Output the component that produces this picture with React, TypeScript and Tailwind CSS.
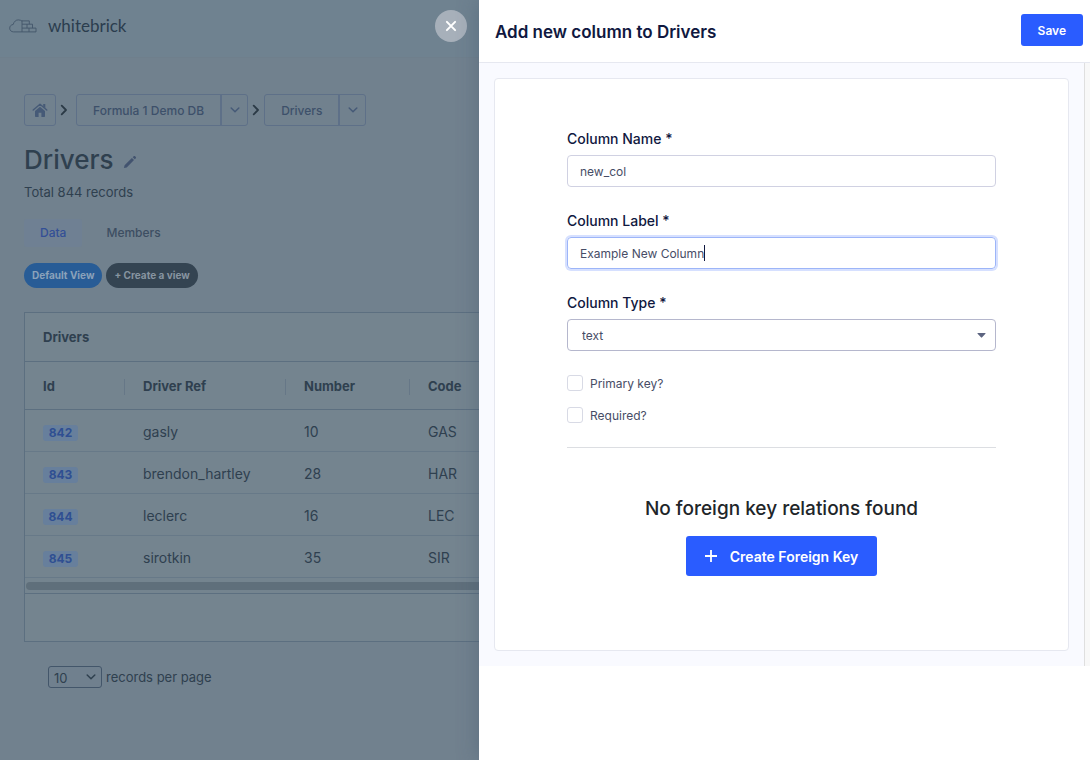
import React from "react";

type Driver = { id: number; ref: string; number: number; code: string };

const drivers: Driver[] = [
  { id: 842, ref: "gasly", number: 10, code: "GAS" },
  { id: 843, ref: "brendon_hartley", number: 28, code: "HAR" },
  { id: 844, ref: "leclerc", number: 16, code: "LEC" },
  { id: 845, ref: "sirotkin", number: 35, code: "SIR" },
];

function CloudBricks() {
  return (
    <svg width="28" height="14" viewBox="0 0 28 14" fill="none" stroke="#43566a" strokeWidth="0.9" strokeLinejoin="round" aria-hidden="true">
      <path d="M13 12.9H4.500C2.200 12.9.7 11.200.7 9.200c0-2 1.500-3.600 3.500-3.700C4.900 2.500 7 .9 9.300.9c1.500 0 2.800.5 3.700 1.200" />
      <path d="M13 1.500V12.900h14V9.100H13M13 5.200h10.500v3.900M13 1.900h7.300v3.300M18 5.200v3.900M20 9.100v3.800" />
    </svg>
  );
}

function HomeIcon() {
  return (
    <svg width="16" height="16" viewBox="0 0 16 16" aria-hidden="true">
      <path d="M8 4.800 3 9v5.200c0 .4.300.7.700.7h2.900v-4.200h2.800v4.200h2.900c.4 0 .7-.3.700-.7V9z" fill="#465a77" />
      <path d="M1.200 8 8 2.200 14.800 8" fill="none" stroke="#465a77" strokeWidth="1.400" strokeLinecap="round" strokeLinejoin="round" />
      <path d="M11.200 1.900h2.100v4.300l-2.100-1.800z" fill="#465a77" />
    </svg>
  );
}

function CrumbArrow() {
  return (
    <svg width="8" height="12" viewBox="0 0 8 12" fill="none" stroke="#2b3a46" strokeWidth="1.800" strokeLinecap="round" strokeLinejoin="round" aria-hidden="true">
      <path d="M1.700 1.700 6 6l-4.300 4.300" />
    </svg>
  );
}

function ChevronDown({ color }: { color: string }) {
  return (
    <svg width="10" height="6" viewBox="0 0 10 6" fill="none" stroke={color} strokeWidth="1.500" strokeLinecap="round" strokeLinejoin="round" aria-hidden="true">
      <path d="M1.200 1 5 4.800 8.800 1" />
    </svg>
  );
}

function SplitButton({ label }: { label: string }) {
  return (
    <div className="flex h-8 rounded-[3px] border border-[#5e7088] text-[12px] font-medium text-[#3d506a]">
      <button type="button" className="whitespace-nowrap px-4 pt-0.5">{label}</button>
      <button type="button" aria-label={label + " menu"} className="flex w-[27px] items-center justify-center border-l-2 border-[#5e7088]">
        <ChevronDown color="#465a77" />
      </button>
    </div>
  );
}

function DriversPage() {
  return (
    <div className="min-w-0 flex-1 overflow-hidden bg-[#71818e] text-[#2f404f]">
      <header className="flex h-[58px] items-start justify-between border-b border-[#6f7f8c] bg-[#6f8290] pl-[9px] pr-3 pt-2.5">
        <a href="#" className="flex h-8 items-center gap-[11px]">
          <CloudBricks />
          <span className="font-['Lato',sans-serif] text-[17px] font-normal leading-8 text-[#2b3d4e]">whitebrick</span>
        </a>
        <button type="button" aria-label="Close" className="flex size-8 items-center justify-center rounded-full bg-[#a7b0ba]">
          <svg width="12" height="12" viewBox="0 0 12 12" stroke="#fff" strokeWidth="2" strokeLinecap="round" aria-hidden="true">
            <path d="M1.900 1.900l8.200 8.200M10.100 1.900 1.900 10.100" />
          </svg>
        </button>
      </header>

      <main className="pl-6 pt-9">
        <nav aria-label="Breadcrumb" className="flex items-center">
          <button type="button" aria-label="Home" className="flex size-8 items-center justify-center rounded-[3px] border border-[#5e7088]">
            <HomeIcon />
          </button>
          <span className="flex w-5 justify-center pr-1"><CrumbArrow /></span>
          <SplitButton label="Formula 1 Demo DB" />
          <span className="flex w-4 justify-center"><CrumbArrow /></span>
          <SplitButton label="Drivers" />
        </nav>

        <div className="mt-4 flex h-9 items-center gap-2.5">
          <h1 className="text-[26px] font-medium leading-9">Drivers</h1>
          <button type="button" aria-label="Rename table" className="pt-1">
            <svg width="14" height="14" viewBox="0 0 14 14" fill="#42536f" aria-hidden="true">
              <path d="M.9 13.100 1.600 10.300 8.900 3l2.100 2.100-7.300 7.300zM9.700 2.200l1-1c.4-.4 1-.4 1.400 0l.7.700c.4.4.4 1 0 1.400l-1 1z" />
            </svg>
          </button>
        </div>
        <p className="mt-1 text-[13px] leading-5">Total 844 records</p>

        <div role="tablist" className="mt-[17px] flex gap-2 text-[12px] font-medium">
          <button role="tab" aria-selected="true" type="button" className="h-7 rounded-[3px] bg-[#6f8093] px-4 text-[#334f96]">Data</button>
          <button role="tab" aria-selected="false" type="button" className="h-7 px-4 text-[#3d4e62]">Members</button>
        </div>

        <div className="mt-4 flex gap-1 text-[10px] font-bold">
          <button type="button" className="h-[25px] rounded-full bg-[#285c96] px-2 text-[#8ba2ba]">Default View</button>
          <button type="button" className="h-[25px] rounded-full bg-[#344452] px-2 text-[#8794a0]">+ Create a view</button>
        </div>

        <section className="mt-6 border-y border-l border-[#5c6f80] bg-[#74848f]">
          <h2 className="flex h-[49px] items-center border-b border-[#5c6f80] pl-[18px] pt-0.5 text-[13px] font-bold">Drivers</h2>
          <table className="w-full table-fixed border-separate border-spacing-0 text-left">
            <colgroup>
              <col className="w-[100px]" />
              <col className="w-[161px]" />
              <col className="w-[124px]" />
              <col />
            </colgroup>
            <thead>
              <tr className="text-[13px]">
                {["Id", "Driver Ref", "Number", "Code"].map((name, i) => (
                  <th key={name} className="h-12 border-b border-[#5c6f80] px-0 pb-0 pt-0.5 font-bold">
                    <div className={i < 3 ? "flex h-4 items-center border-r border-[#667787] pl-[18px]" : "flex h-4 items-center pl-[18px]"}>{name}</div>
                  </th>
                ))}
              </tr>
            </thead>
            <tbody>
              {drivers.map((d) => (
                <tr key={d.id} className="text-[14px]">
                  <td className="h-[42px] border-b border-[#677988] pb-0 pl-[18px] pt-1">
                    <a href="#" className="flex h-4 w-[35px] items-center justify-center rounded-[3px] bg-[#677f9c] text-[12px] font-bold text-[#2f4f92]">{d.id}</a>
                  </td>
                  <td className="h-[42px] border-b border-[#677988] pb-0 pl-[18px] pt-0.5">{d.ref}</td>
                  <td className="h-[42px] border-b border-[#677988] pb-0 pl-[18px] pt-0.5">{d.number}</td>
                  <td className="h-[42px] border-b border-[#677988] pb-0 pl-[18px] pt-0.5">{d.code}</td>
                </tr>
              ))}
            </tbody>
          </table>
          <div className="flex h-4 items-center border-b border-[#5c6f80] pl-px">
            <div className="h-2 flex-1 rounded-l-full bg-[#5f6f7b]" />
          </div>
          <div className="h-[47px]" />
        </section>

        <div className="mt-6 flex h-[22px] items-center gap-1 pl-6 text-[13px]">
          <div className="relative">
            <select id="page-size" defaultValue="10" className="block h-[22px] w-[54px] appearance-none rounded-[3px] border border-[#43566a] bg-[#70808e] pl-[5px] pt-0.5 text-[13px]">
              <option>10</option>
              <option>25</option>
              <option>50</option>
            </select>
            <span className="pointer-events-none absolute inset-y-0 right-1.5 flex items-center">
              <ChevronDown color="#2f404f" />
            </span>
          </div>
          <label htmlFor="page-size" className="pt-0.5">records per page</label>
        </div>
      </main>
    </div>
  );
}

function CheckRow({ id, label }: { id: string; label: string }) {
  return (
    <div className="flex h-4 items-center gap-[7px]">
      <input id={id} type="checkbox" className="size-4 appearance-none rounded-[3px] border border-[#d8dae5] bg-white checked:bg-[#2a5cff]" />
      <label htmlFor={id} className="pt-0.5 text-[12px] text-[#474d66]">{label}</label>
    </div>
  );
}

function ColumnPanel() {
  return (
    <form className="z-10 w-[611px] shrink-0 bg-white shadow-[0_0_20px_rgba(67,90,111,0.47)]" onSubmit={(e) => e.preventDefault()}>
      <header className="flex items-center justify-between border-b border-[#e6e8f0] pb-4 pl-4 pr-[7px] pt-3.5">
        <h2 className="pt-1 text-[17px] font-semibold leading-6 text-[#101840]">Add new column to Drivers</h2>
        <button type="submit" className="h-8 rounded-[3px] bg-[#2a5cff] px-[17px] pt-0.5 text-[12px] font-semibold text-white">Save</button>
      </header>

      <div className="flex">
        <div className="flex-1 border-r border-[#dfdfdf] bg-[#f9faff] p-[15px]">
          <div className="rounded-[4px] border border-[#e6e8f0] bg-white px-[72px] pb-[74px] pt-[50px] text-[12px] text-[#474d66]">
            <div className="flex flex-col gap-6">
              <div className="flex flex-col gap-1.5">
                <label htmlFor="col-name" className="text-[14px] font-medium leading-5 text-[#101840]">Column Name *</label>
                <input id="col-name" defaultValue="new_col" className="h-8 rounded-[4px] border border-[#d0d1e2] px-3 outline-none" />
              </div>
              <div className="flex flex-col gap-1.5">
                <label htmlFor="col-label" className="text-[14px] font-medium leading-5 text-[#101840]">Column Label *</label>
                <div className="relative flex">
                  <input id="col-label" defaultValue="Example New Column" className="h-8 flex-1 rounded-[4px] border border-[#9db5f8] px-3 shadow-[0_0_0_2px_#d6e0ff] outline-none" />
                  <span className="absolute left-[137px] top-2 h-4 w-px bg-[#101840]" />
                </div>
              </div>
              <div className="flex flex-col gap-1.5">
                <label htmlFor="col-type" className="text-[14px] font-medium leading-5 text-[#101840]">Column Type *</label>
                <div className="relative flex">
                  <select id="col-type" defaultValue="text" className="h-8 flex-1 appearance-none rounded-[4px] border border-[#b5b7cd] bg-white px-3.5 pt-0.5 outline-none">
                    <option>text</option>
                    <option>integer</option>
                    <option>boolean</option>
                  </select>
                  <span className="pointer-events-none absolute inset-y-0 right-2.5 flex items-center">
                    <svg width="9" height="6" viewBox="0 0 9 6" fill="#5c6480" aria-hidden="true">
                      <path d="M.9.900h7.200c.4 0 .6.500.3.800L4.900 5.500c-.2.200-.5.200-.7 0L.6 1.700C.3 1.400.5.900.9.900z" />
                    </svg>
                  </span>
                </div>
              </div>
              <div className="flex flex-col gap-4">
                <CheckRow id="primary-key" label="Primary key?" />
                <CheckRow id="required" label="Required?" />
              </div>
              <hr className="border-[#dcdee2]" />
            </div>

            <div className="mt-[46px] flex flex-col items-center gap-3">
              <h3 className="text-[19px] font-medium leading-[30px] text-[#212529]">No foreign key relations found</h3>
              <button type="button" className="flex h-10 items-center gap-3 rounded-[3px] bg-[#2a5cff] pl-[18px] pr-[19px] text-[14px] font-semibold text-white">
                <svg width="14" height="14" viewBox="0 0 14 14" stroke="#fff" strokeWidth="1.800" aria-hidden="true">
                  <path d="M7 1v12M1 7h12" />
                </svg>
                Create Foreign Key
              </button>
            </div>
          </div>
        </div>
        <div className="w-[5px] bg-[#f8f8f8]" />
      </div>
    </form>
  );
}

export default function App() {
  return (
    <div className="flex min-h-screen font-['Inter',sans-serif]">
      <DriversPage />
      <ColumnPanel />
    </div>
  );
}
